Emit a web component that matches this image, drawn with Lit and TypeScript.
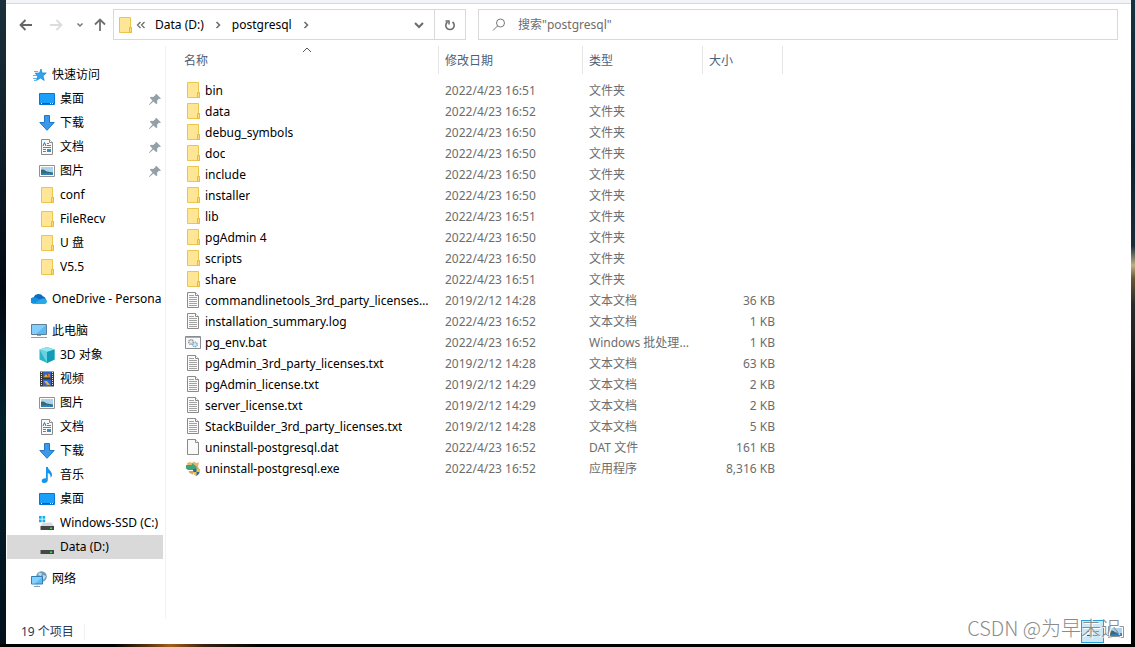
import { LitElement, html, css, svg, nothing, TemplateResult } from "lit";
import { customElement, property } from "lit/decorators.js";
import { classMap } from "lit/directives/class-map.js";

type Entry = { name: string; date: string; type: string; size?: string; icon: string };
type Place = { label: string; icon: string; pinned?: boolean; current?: boolean };
type Group = { label: string; icon: string; places: Place[] };

const folder = (name: string, time: string): Entry => ({
  name,
  date: `2022/4/23 ${time}`,
  type: "文件夹",
  icon: "folder",
});

const ENTRIES: Entry[] = [
  folder("bin", "16:51"),
  folder("data", "16:52"),
  folder("debug_symbols", "16:50"),
  folder("doc", "16:50"),
  folder("include", "16:50"),
  folder("installer", "16:50"),
  folder("lib", "16:51"),
  folder("pgAdmin 4", "16:50"),
  folder("scripts", "16:50"),
  folder("share", "16:51"),
  { name: "commandlinetools_3rd_party_licenses.txt", date: "2019/2/12 14:28", type: "文本文档", size: "36 KB", icon: "text" },
  { name: "installation_summary.log", date: "2022/4/23 16:52", type: "文本文档", size: "1 KB", icon: "text" },
  { name: "pg_env.bat", date: "2022/4/23 16:52", type: "Windows 批处理文件", size: "1 KB", icon: "batch" },
  { name: "pgAdmin_3rd_party_licenses.txt", date: "2019/2/12 14:28", type: "文本文档", size: "63 KB", icon: "text" },
  { name: "pgAdmin_license.txt", date: "2019/2/12 14:29", type: "文本文档", size: "2 KB", icon: "text" },
  { name: "server_license.txt", date: "2019/2/12 14:29", type: "文本文档", size: "2 KB", icon: "text" },
  { name: "StackBuilder_3rd_party_licenses.txt", date: "2019/2/12 14:28", type: "文本文档", size: "5 KB", icon: "text" },
  { name: "uninstall-postgresql.dat", date: "2022/4/23 16:52", type: "DAT 文件", size: "161 KB", icon: "blank" },
  { name: "uninstall-postgresql.exe", date: "2022/4/23 16:52", type: "应用程序", size: "8,316 KB", icon: "installer" },
];

const GROUPS: Group[] = [
  {
    label: "快速访问",
    icon: "star",
    places: [
      { label: "桌面", icon: "desktop", pinned: true },
      { label: "下载", icon: "download", pinned: true },
      { label: "文档", icon: "document", pinned: true },
      { label: "图片", icon: "picture", pinned: true },
      { label: "conf", icon: "folder" },
      { label: "FileRecv", icon: "folder" },
      { label: "U 盘", icon: "folder" },
      { label: "V5.5", icon: "folder" },
    ],
  },
  { label: "OneDrive - Personal", icon: "cloud", places: [] },
  {
    label: "此电脑",
    icon: "computer",
    places: [
      { label: "3D 对象", icon: "cube" },
      { label: "视频", icon: "video" },
      { label: "图片", icon: "picture" },
      { label: "文档", icon: "document" },
      { label: "下载", icon: "download" },
      { label: "音乐", icon: "music" },
      { label: "桌面", icon: "desktop" },
      { label: "Windows-SSD (C:)", icon: "system-drive" },
      { label: "Data (D:)", icon: "drive", current: true },
    ],
  },
  { label: "网络", icon: "network", places: [] },
];

const page = svg`
  <path d="M2.500.500h8l3 3v12h-11z" fill="#fafafa" stroke="#8b8b8b"/>
  <path d="M10.500.500v3h3" fill="#fff" stroke="#8b8b8b"/>`;

const driveBody = svg`
  <path d="M3.500 7.500h9l2.500 4H1.500z" fill="#d8d9da"/>
  <path d="M1.500 11h13.500v4H1.500z" fill="#44474a"/>
  <path d="M11 12.500h2v1.500h-2z" fill="#3ee04a"/>`;

const ICONS: Record<string, TemplateResult> = {
  folder: svg`
    <path d="M2.500.500h11v10h1v5h-12z" fill="#ffe596" stroke="#eac64e"/>
    <path d="M12.500 15.500v-5h2v5z" fill="#fbdc7b" stroke="#e5bc3c"/>`,
  text: svg`${page}
    <path d="M4 3.500h5M4 5.500h8M4 7.500h8M4 9.500h8M4 11.500h8M4 13.500h8" stroke="#a2a2a2"/>`,
  blank: page,
  batch: svg`
    <path d="M.500 2.500h15v12H.500z" fill="#f7f9fa" stroke="#888d92"/>
    <path d="M1 3.500h14" stroke="#a8adb2"/>
    <circle cx="6" cy="8" r="2.300" fill="#e4e8ea" stroke="#8f979d" stroke-width="1.500" stroke-dasharray="1.200 .6"/>
    <circle cx="10" cy="10.500" r="2.200" fill="#d5eaf6" stroke="#77a9c8" stroke-width="1.500" stroke-dasharray="1.200 .6"/>`,
  installer: svg`
    <path d="M2 3l3-1 2 1 2-1.500 2 1.500 3-.5-1 4 1.500 3-3.500 1-8-1z" fill="#e7b565"/>
    <path d="M1 5h6V3l5 4-4 4.500V10H3L1 8.500z" fill="#3fa47a"/>
    <path d="M3.500 11H8v3.500L4.500 13z" fill="#d7a35a"/>
    <path d="M8 9.500L11.500 8 15 9.500c0 3-1 5-3.500 6.500C9 14.500 8 12.500 8 9.500z" fill="#2468b4"/>
    <path d="M11.500 8L15 9.500V12h-3.500zM8.200 12h3.300v4C9.500 15 8.500 13.500 8.200 12z" fill="#f5c63c"/>`,
  star: svg`
    <path d="M10 2l1.200 3.900 4.100.1-3.300 2.700 1.200 4.700-3.700-2.400-4 2.400 1.200-4.500L4 6.200l4.500-.2z" fill="#2ea3ee" stroke="#1683cf" stroke-width=".7"/>
    <path d="M3 4.500h4M2 8.500h4M2 11.500h4M3 13.500h2" stroke="#55b5f3"/>`,
  desktop: svg`
    <path d="M.500 2.500h15v11H.500z" fill="#19a0fb" stroke="#0878d2"/>
    <path d="M1 12.500h14" stroke="#0460ac"/>
    <path d="M2 12.500h1M11 12.500h1M13 12.500h1" stroke="#fff"/>`,
  download: svg`<path d="M5.500.500h5v7h4.700L8 15.300.8 7.500h4.700z" fill="#3c98e9" stroke="#1f78ca"/>`,
  document: svg`${page}
    <path d="M8 4.500h2M8 6.500h4M4 8.500h8M4 10.500h3M4 12.500h3" stroke="#2f92d6"/>
    <path d="M4 7l1.500-3.500L7 7" stroke="#1677b8" fill="none"/>
    <path d="M8 10h4v3H8z" fill="#3f8fb8"/>`,
  picture: svg`
    <path d="M.500 2.500h15v11H.500z" fill="#fff" stroke="#929292"/>
    <path d="M2 4h12v8H2z" fill="#a9d3ef"/>
    <path d="M2 7c3-1.500 4 1 6 1.500s4 .5 6 1V12H2z" fill="#356a76"/>
    <path d="M2 10.500c4-1 8-.5 12 0V12H2z" fill="#2f80bd"/>`,
  cloud: svg`
    <path d="M3 12.500a3 3 0 01-.5-6A5.500 5.500 0 0112 5.200a4 4 0 011 7.300z" fill="#0f6cbd"/>
    <path d="M2.500 6.500c3-.5 5 1.500 7 2.500l-7 3.500a3 3 0 010-6z" fill="#1490df"/>
    <path d="M2.500 13L9 8.500c3-2 7-1 7 1.800 0 1.700-1.200 2.700-2.500 2.700z" fill="#28a8ea"/>`,
  computer: svg`
    <path d="M.500 1.500h15v10H.500z" fill="#5abaf8" stroke="#5f7f96"/>
    <path d="M1 2h14L5 11H1z" fill="#83cefd"/>
    <path d="M6 12.500h4" stroke="#8fa3b1"/>
    <path d="M0 14.500h16" stroke="#8da0ad"/>`,
  cube: svg`
    <path d="M8 0l7.500 2.500v10L8 16 .500 12.500v-10z" fill="#28b5cb"/>
    <path d="M8 0l7.500 2.500L8 5 .500 2.500z" fill="#91e6ee"/>
    <path d="M8 5l7.500-2.500v10L8 16z" fill="#119bb5"/>
    <path d="M.500 2.500L8 5v11z" fill="#68d2df"/>`,
  video: svg`
    <path d="M1 .500h14v15H1z" fill="#383838"/>
    <path d="M2.500 1v14M13.500 1v14" stroke="#e6e6e6" stroke-dasharray="1 1"/>
    <path d="M4 1h8v6H4z" fill="#3860c4"/><path d="M4 8.500h8v6.500H4z" fill="#3266d8"/>
    <path d="M5 6l2-3 2 3z" fill="#d9b636"/><path d="M9 3h2v3H9z" fill="#d9792f"/>
    <path d="M5 10h3l3 4H8z" fill="#d9b636"/>`,
  music: svg`
    <path d="M7 0h1.800c.3 3 4.800 4 4.200 9l-1.500 1.500c.2-3-1-4-2.700-4.500V13c0 1.800-1.500 3-3.500 3-1.500 0-2.600-.8-2.600-2.100 0-1.700 2-3 4.300-2.600z" fill="#1696ea"/>`,
  "system-drive": svg`
    ${driveBody}
    <path d="M-1 0h8.500v8H-1z" fill="#fff"/>
    <path d="M0 1h2.700v2.700H0zM3.500 1h2.700v2.700H3.500zM0 4.500h2.700v2.700H0zM3.500 4.500h2.700v2.700H3.500z" fill="#18aeed"/>`,
  drive: driveBody,
  network: svg`
    <circle cx="10.500" cy="5.500" r="5.300" fill="#6f9cbb"/>
    <path d="M8 1.500l3 1-1 2.500-3-1zM12 4l3 1-2 4-2-2z" fill="#c3dcea"/>
    <path d="M.500 5.500h11v7.500H.500z" fill="#5cbcf8" stroke="#327db2"/>
    <path d="M1 6h10l-7 6.500H1z" fill="#86d0fc"/>
    <path d="M3 15.500h6M6 13.500v1" stroke="#86a2b4"/>`,
  pin: svg`
    <path d="M9.500 3l4.500 4.500-1.300.5-.6-.4-2 2.200.2 2.600-1.300.6-2.500-2.500L2.500 14l-.5-.5 3.500-4L3 7l.6-1.300 2.700.2 2.200-2-.3-.7z" fill="#93a0a9"/>`,
  back: svg`<path d="M14 8H3M7.500 3L2.500 8l5 5" fill="none" stroke="#666" stroke-width="1.800"/>`,
  forward: svg`<path d="M2 8h11M8.500 3l5 5-5 5" fill="none" stroke="#dcdcdc" stroke-width="1.800"/>`,
  up: svg`<path d="M8 14V3M3 7.500l5-5 5 5" fill="none" stroke="#707070" stroke-width="1.800"/>`,
  recent: svg`<path d="M5.500 6.500L8 9l2.500-2.500" fill="none" stroke="#777" stroke-width="1.500"/>`,
  dropdown: svg`<path d="M4 6l4 4 4-4" fill="none" stroke="#6c6c6c" stroke-width="2"/>`,
  chevron: svg`<path d="M6.500 5L9.500 8l-3 3" fill="none" stroke="#686868" stroke-width="1.500"/>`,
  overflow: svg`<path d="M7.500 5l-3 3 3 3M11.500 5l-3 3 3 3" fill="none" stroke="#686868" stroke-width="1.200"/>`,
  refresh: svg`
    <path d="M10.500 5A4.200 4.200 0 1 1 5.500 5" fill="none" stroke="#6c6c6c" stroke-width="1.600"/>
    <path d="M3.500 4h3.500v3.500" fill="none" stroke="#6c6c6c" stroke-width="1.500"/>`,
  search: svg`
    <circle cx="9.500" cy="6" r="4" fill="none" stroke="#777"/>
    <path d="M6.500 9L2 13.500" stroke="#777"/>`,
  sort: svg`<path d="M4 10l4-4 4 4" fill="none" stroke="#555"/>`,
  details: svg`
    <path d="M2 3.500h3M2 7.500h3M2 11.500h3" stroke="#3f5a6c"/>
    <path d="M6 3.500h8M6 7.500h8M6 11.500h8" stroke="#7d95a4"/>
    <path d="M3 7h1v1H3z" fill="#b9402a"/>`,
};

@customElement("app-icon")
class AppIcon extends LitElement {
  static styles = css`
    :host {
      display: block;
      flex: none;
      width: 16px;
      height: 16px;
    }
    .glyph {
      display: block;
      width: 16px;
      height: 16px;
    }
  `;

  @property() name = "";

  render() {
    return html`<svg class="glyph" viewBox="0 0 16 16" aria-hidden="true">${ICONS[this.name]}</svg>`;
  }
}

const base = css`
  * {
    box-sizing: border-box;
  }
  button,
  input {
    margin: 0;
    padding: 0;
    border: 0;
    background: none;
    color: inherit;
    font: inherit;
  }
`;

@customElement("address-toolbar")
class AddressToolbar extends LitElement {
  static styles = [
    base,
    css`
      :host {
        display: flex;
        padding: 5px 13px 6px 12px;
      }
      .history {
        display: flex;
        align-items: center;
        width: 95px;
      }
      .history-button {
        display: grid;
        place-items: center;
        width: 16px;
        height: 24px;
      }
      .back {
        margin-right: 14px;
      }
      .forward {
        margin-right: 8px;
      }
      .recent {
        margin-right: 4px;
      }
      .fields {
        flex: 1;
        display: grid;
        grid-template-columns: 16fr 29fr;
        gap: 12px;
        min-width: 0;
      }
      .address,
      .search {
        display: flex;
        align-items: center;
        height: 31px;
        min-width: 0;
        border: 1px solid #d9d9d9;
      }
      .address {
        padding-left: 3px;
      }
      .crumbs {
        flex: 1;
        display: flex;
        align-items: center;
        min-width: 0;
        overflow: hidden;
      }
      .crumb {
        padding: 0 6px;
        white-space: nowrap;
      }
      .expand {
        display: grid;
        place-items: center;
        width: 16px;
        height: 24px;
      }
      .drop,
      .refresh {
        display: grid;
        place-items: center;
        align-self: stretch;
        width: 31px;
      }
      .refresh {
        border-left: 1px solid #d9d9d9;
      }
      .search {
        gap: 11px;
        padding: 0 12px;
        color: #6d6d6d;
      }
      .query {
        flex: 1;
        min-width: 0;
        outline: 0;
      }
      .query::placeholder {
        color: #6d6d6d;
        opacity: 1;
      }
    `,
  ];

  render() {
    return html`
      <nav class="history" aria-label="导航">
        <button class="history-button back" aria-label="后退"><app-icon name="back"></app-icon></button>
        <button class="history-button forward" aria-label="前进" disabled><app-icon name="forward"></app-icon></button>
        <button class="history-button recent" aria-label="最近位置"><app-icon name="recent"></app-icon></button>
        <button class="history-button" aria-label="上移"><app-icon name="up"></app-icon></button>
      </nav>
      <div class="fields">
        <div class="address">
          <app-icon name="folder"></app-icon>
          <div class="crumbs">
            <button class="expand" aria-label="更多"><app-icon name="overflow"></app-icon></button>
            ${["Data (D:)", "postgresql"].map(
              (crumb) => html`
                <button class="crumb">${crumb}</button>
                <button class="expand" aria-label="展开 ${crumb}"><app-icon name="chevron"></app-icon></button>
              `
            )}
          </div>
          <button class="drop" aria-label="以前的位置"><app-icon name="dropdown"></app-icon></button>
          <button class="refresh" aria-label="刷新"><app-icon name="refresh"></app-icon></button>
        </div>
        <label class="search">
          <app-icon name="search"></app-icon>
          <input class="query" type="text" aria-label="搜索" placeholder='搜索"postgresql"' />
        </label>
      </div>
    `;
  }
}

@customElement("place-tree")
class PlaceTree extends LitElement {
  static styles = [
    base,
    css`
      :host {
        display: block;
        box-sizing: border-box;
        flex: none;
        width: 160px;
        padding: 17px 2px 0 1px;
        border-right: 1px solid #f2f2f2;
        overflow: hidden;
      }
      .group {
        margin-bottom: 8px;
      }
      .place {
        display: flex;
        align-items: center;
        gap: 5px;
        height: 24px;
        padding-left: 32px;
        color: #000;
        text-decoration: none;
      }
      .root {
        padding-right: 2px;
        padding-left: 24px;
      }
      .current {
        background: #d9d9d9;
      }
      .label {
        flex: 1;
        min-width: 0;
        overflow: hidden;
        white-space: nowrap;
      }
    `,
  ];

  private row(place: Place, root: boolean) {
    return html`
      <a class=${classMap({ place: true, root, current: !!place.current })} href="#">
        <app-icon name=${place.icon}></app-icon>
        <span class="label">${place.label}</span>
        ${place.pinned ? html`<app-icon name="pin"></app-icon>` : nothing}
      </a>
    `;
  }

  render() {
    return GROUPS.map(
      (group) => html`
        <div class="group">
          ${this.row(group, true)} ${group.places.map((place) => this.row(place, false))}
        </div>
      `
    );
  }
}

@customElement("file-list")
class FileList extends LitElement {
  static styles = [
    base,
    css`
      :host {
        display: block;
        flex: 1;
        min-width: 0;
      }
      .files {
        width: 617px;
        table-layout: fixed;
        border-collapse: separate;
        border-spacing: 0;
      }
      .col-name {
        width: 273px;
      }
      .col-date {
        width: 144px;
      }
      .col-type {
        width: 120px;
      }
      .col-size {
        width: 80px;
      }
      .heading {
        position: relative;
        height: 28px;
        padding: 2px 6px 0;
        border-right: 1px solid #e5e5e5;
        color: #4c607a;
        font-weight: 400;
        text-align: left;
      }
      .heading:first-child {
        padding-left: 18px;
      }
      .sort {
        position: absolute;
        top: -4px;
        left: 49%;
      }
      .spacer {
        height: 6px;
        padding: 0;
      }
      .cell {
        height: 21px;
        padding: 1px 6px 0;
        color: #6d6d6d;
        line-height: 20px;
        vertical-align: top;
        overflow: hidden;
        white-space: nowrap;
        text-overflow: ellipsis;
      }
      .name {
        padding-right: 8px;
        padding-left: 19px;
        color: #000;
      }
      .file {
        display: flex;
        align-items: flex-start;
        gap: 4px;
      }
      .file-icon {
        margin-top: 1px;
      }
      .file-name {
        min-width: 0;
        overflow: hidden;
        text-overflow: ellipsis;
      }
      .size {
        padding-right: 8px;
        text-align: right;
      }
    `,
  ];

  render() {
    return html`
      <table class="files">
        <colgroup>
          <col class="col-name" />
          <col class="col-date" />
          <col class="col-type" />
          <col class="col-size" />
        </colgroup>
        <thead>
          <tr>
            <th class="heading" aria-sort="ascending">名称<app-icon class="sort" name="sort"></app-icon></th>
            <th class="heading">修改日期</th>
            <th class="heading">类型</th>
            <th class="heading">大小</th>
          </tr>
        </thead>
        <tbody>
          <tr>
            <td class="spacer" colspan="4"></td>
          </tr>
          ${ENTRIES.map(
            (entry) => html`
              <tr>
                <td class="cell name">
                  <div class="file">
                    <app-icon class="file-icon" name=${entry.icon}></app-icon>
                    <span class="file-name">${entry.name}</span>
                  </div>
                </td>
                <td class="cell">${entry.date}</td>
                <td class="cell">${entry.type}</td>
                <td class="cell size">${entry.size ?? ""}</td>
              </tr>
            `
          )}
        </tbody>
      </table>
    `;
  }
}

@customElement("app-root")
class AppRoot extends LitElement {
  static styles = [
    base,
    css`
      :host {
        display: block;
        box-sizing: border-box;
        min-height: 100vh;
        padding: 0 4px 3px 6px;
        background:
          linear-gradient(90deg, transparent 10%, #5a3210 13%, #a0601c 15%, #3a2010 18%, transparent 23%) left bottom / 100% 3px no-repeat,
          linear-gradient(#000, #000) left bottom / 100% 3px no-repeat,
          linear-gradient(#14323f 0%, #0e2230 25%, #1a2c38 38%, #c0ae86 41%, #6b5538 43%, #2e2a2a 47%, #151216 60%, #000 100%) right top / 4px 100% no-repeat,
          linear-gradient(#1b303c 0%, #0e1d29 25%, #020812 45%, #03222e 65%, #02101c 100%);
        font: 12px/16px "Noto Sans", "Noto Sans CJK SC", sans-serif;
        color: #000;
      }
      .window {
        position: relative;
        display: flex;
        flex-direction: column;
        min-height: calc(100vh - 3px);
        background: #fff;
      }
      .ribbon-edge {
        height: 4px;
        border-bottom: 1px solid #d9dade;
        background: #f3f4f8;
      }
      .body {
        flex: 1;
        display: flex;
      }
      .status {
        display: flex;
        align-items: center;
        height: 25px;
        padding: 0 4px 0 15px;
        color: #26395c;
      }
      .count {
        flex: 1;
      }
      .count-text {
        display: inline-block;
        padding-right: 10px;
        border-right: 1px solid #f0f0f0;
      }
      .view {
        display: grid;
        place-items: center;
        width: 23px;
        height: 23px;
      }
      .selected {
        border: 1px solid #26a0da;
        background: #cbe8f6;
      }
      .watermark {
        position: absolute;
        right: 10px;
        bottom: 4px;
        color: #8c8c8c;
        font: 300 20px/24px "Noto Sans CJK SC", sans-serif;
        text-shadow: 1px 1px 0 #fff;
        pointer-events: none;
      }
    `,
  ];

  render() {
    return html`
      <main class="window">
        <div class="ribbon-edge"></div>
        <address-toolbar></address-toolbar>
        <div class="body">
          <place-tree></place-tree>
          <file-list></file-list>
        </div>
        <footer class="status">
          <div class="count"><span class="count-text">${ENTRIES.length} 个项目</span></div>
          <button class="view selected" aria-label="详细信息"><app-icon name="details"></app-icon></button>
          <button class="view" aria-label="大图标"><app-icon name="picture"></app-icon></button>
        </footer>
        <div class="watermark">CSDN @为早未迟</div>
      </main>
    `;
  }
}
